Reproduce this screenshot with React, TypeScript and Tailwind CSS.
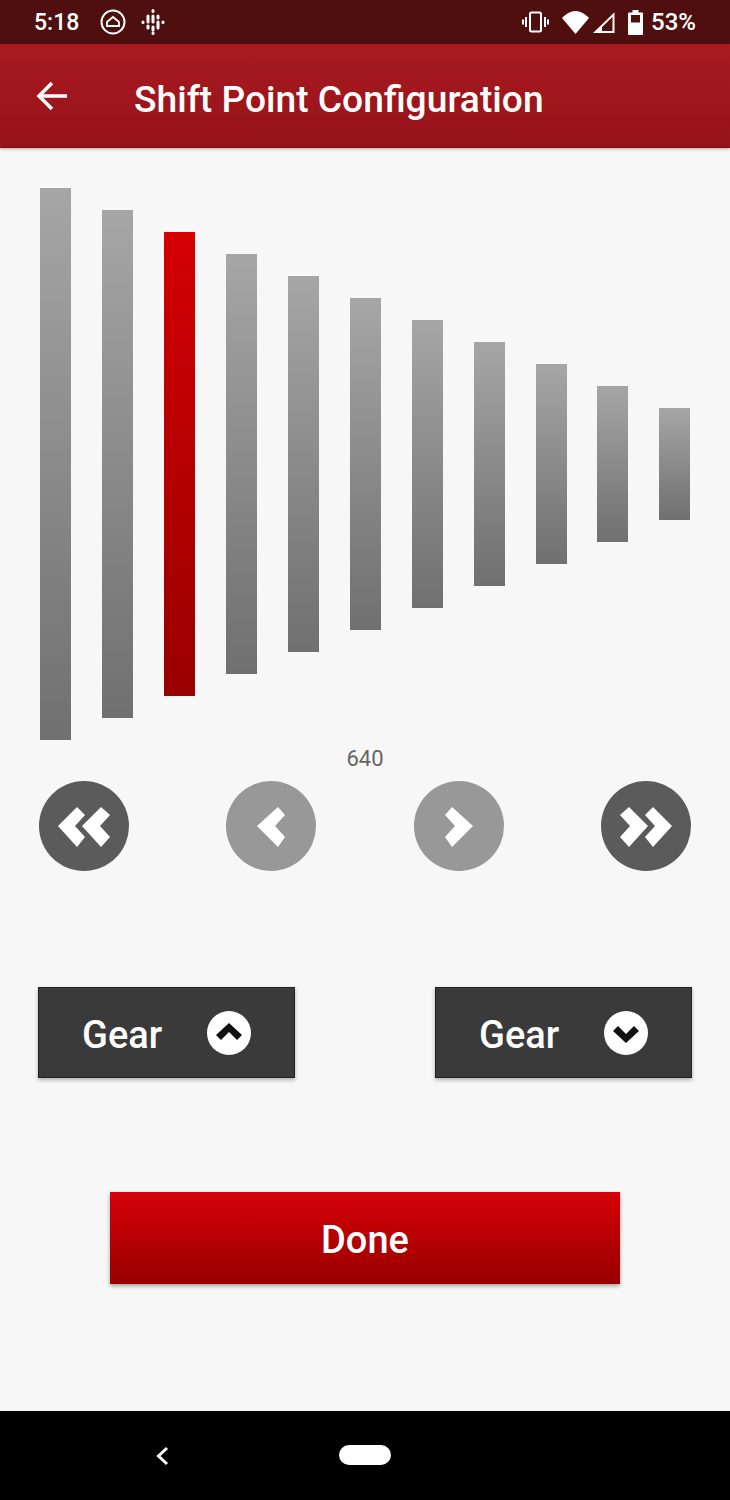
import React from "react";

const gray = "from-[#a6a6a6] to-[#707070]";
const bars = [
  { h: "h-[552px]", c: gray },
  { h: "h-[508px]", c: gray },
  { h: "h-[464px]", c: "from-[#d40004] to-[#990000]" },
  { h: "h-[420px]", c: gray },
  { h: "h-[376px]", c: gray },
  { h: "h-[332px]", c: gray },
  { h: "h-[288px]", c: gray },
  { h: "h-[244px]", c: gray },
  { h: "h-[200px]", c: gray },
  { h: "h-[156px]", c: gray },
  { h: "h-[112px]", c: gray },
];

const single = "31,45 52,26 59,34 49,45 59,56 52,66";
const doubleA = "19,45 38,26 46,34 36,45 46,56 38,66";
const doubleB = "43,45 62,26 71,34 61,45 71,56 62,66";

function Nav({ fill, double, flip }: { fill: string; double?: boolean; flip?: boolean }) {
  return (
    <svg width="90" height="90" viewBox="0 0 90 90" className="block">
      <circle cx="45" cy="45" r="45" fill={fill} />
      <g fill="#fff" transform={flip ? "translate(90 0) scale(-1 1)" : undefined}>
        {double ? (
          <>
            <polygon points={doubleA} />
            <polygon points={doubleB} />
          </>
        ) : (
          <polygon points={single} />
        )}
      </g>
    </svg>
  );
}

function GearButton({ up }: { up?: boolean }) {
  return (
    <button className="w-[257px] h-[91px] bg-[#3a3a3a] border border-[#222] shadow-[0_2px_4px_rgba(0,0,0,0.3)] flex items-center pl-[43px] gap-[45px]">
      <span className="text-white text-[38px] font-medium leading-none pt-[5px]">Gear</span>
      <svg width="44" height="44" viewBox="0 0 44 44" className="block">
        <circle cx="22" cy="22" r="22" fill="#fff" />
        {up ? (
          <polygon points="22,12 35,24 30,29 22,21 14,29 9,24" fill="#111" />
        ) : (
          <polygon points="22,32 35,20 30,15 22,23 14,15 9,20" fill="#111" />
        )}
      </svg>
    </button>
  );
}

export default function App() {
  return (
    <div className="w-[730px] h-[1500px] flex flex-col bg-[#f7f7f7] overflow-hidden font-['Roboto',sans-serif]">
      <div className="h-[44px] bg-[#4f0f0f] flex items-center justify-between pl-[34px] pr-[34px] text-white">
        <div className="flex items-center">
          <span className="text-[23px] font-medium leading-none w-[44px]">5:18</span>
          <svg width="26" height="26" viewBox="0 0 26 26" className="ml-[22px]" fill="none" stroke="#fff">
            <circle cx="13" cy="13" r="11.5" strokeWidth="2" />
            <path d="M7 17h12v-4L13 8l-6 5Z" strokeWidth="1.800" />
          </svg>
          <svg width="28" height="28" viewBox="0 0 28 28" className="ml-[13px]" stroke="#fff" strokeWidth="3" strokeLinecap="round">
            <path d="M14 2.500v1M14 8v6M14 19v3M14 25v.5M9 8v6M9 18v2M19 8v2M19 14v6M4 14v.5M24 14v.5" />
          </svg>
        </div>
        <div className="flex items-center">
          <svg width="27" height="22" viewBox="0 0 27 22" fill="none" stroke="#fff" strokeWidth="2">
            <rect x="8" y="1.500" width="11" height="19" rx="1.500" />
            <path d="M4 6v10M1 8.500v5M23 6v10M26 8.500v5" />
          </svg>
          <svg width="27" height="23" viewBox="0 0 27 23" className="ml-[13px]">
            <path d="M0 7C4 3 8.500 0 13.500 0S23 3 27 7L13.500 23Z" fill="#fff" />
          </svg>
          <svg width="22" height="21" viewBox="0 0 22 21" className="ml-[4px]" fill="none">
            <path d="M20.500 2.500V20H2.500Z" stroke="#fff" strokeWidth="2" />
            <path d="M2 20 9 14v6Z" fill="#fff" />
          </svg>
          <svg width="15" height="25" viewBox="0 0 15 25" className="ml-[13px]">
            <path d="M4.500 0h6v2.500H14a1 1 0 0 1 1 1V24a1 1 0 0 1-1 1H1a1 1 0 0 1-1-1V3.500a1 1 0 0 1 1-1h3.500Z" fill="#fff" />
            <rect x="3" y="5" width="9" height="7.500" fill="#4f0f0f" />
          </svg>
          <span className="text-[24px] font-medium leading-none ml-[8px]">53%</span>
        </div>
      </div>

      <div className="h-[104px] bg-gradient-to-b from-[#a81a20] to-[#951319] flex items-center pl-[36px] shadow-[0_1px_3px_rgba(0,0,0,0.3)] border-b border-[#7d0f12]">
        <svg width="32" height="32" viewBox="0 0 32 32" fill="none" stroke="#fff" strokeWidth="3.500">
          <path d="M31 16H3M16 3 3 16l13 13" />
        </svg>
        <h1 className="ml-[66px] text-white text-[37.2px] font-medium leading-none pt-[8px]">Shift Point Configuration</h1>
      </div>

      <div className="flex-1 flex flex-col">
        <div className="mt-[40px] h-[552px] ml-[40px] mr-[39.5px] flex items-center justify-between">
          {bars.map((b, i) => (
            <div key={i} className={`w-[31px] ${b.h} bg-gradient-to-b ${b.c}`} />
          ))}
        </div>

        <div className="mt-[8px] text-center text-[#666] text-[22px] leading-[22px] h-[22px]">640</div>

        <div className="mt-[11px] ml-[39px] mr-[39px] flex justify-between">
          <Nav fill="#5b5b5b" double />
          <Nav fill="#989898" />
          <Nav fill="#989898" flip />
          <Nav fill="#5b5b5b" double flip />
        </div>

        <div className="mt-[116px] ml-[38px] mr-[38px] flex justify-between">
          <GearButton up />
          <GearButton />
        </div>

        <div className="mt-[114px] flex justify-center">
          <button className="w-[510px] h-[92px] bg-gradient-to-b from-[#d6000a] to-[#980000] shadow-[0_2px_4px_rgba(0,0,0,0.35)] text-white text-[38px] font-medium leading-none pt-[3px]">
            Done
          </button>
        </div>
      </div>

      <div className="h-[89px] bg-black relative flex items-center justify-center">
        <div className="w-[52px] h-[20px] rounded-full bg-white -mt-[2px]" />
        <svg width="14" height="20" viewBox="0 0 14 20" fill="none" stroke="#fff" strokeWidth="3" className="absolute left-[155px] top-[35px]">
          <path d="M12 2 3.500 10l8.500 8" />
        </svg>
      </div>
    </div>
  );
}
